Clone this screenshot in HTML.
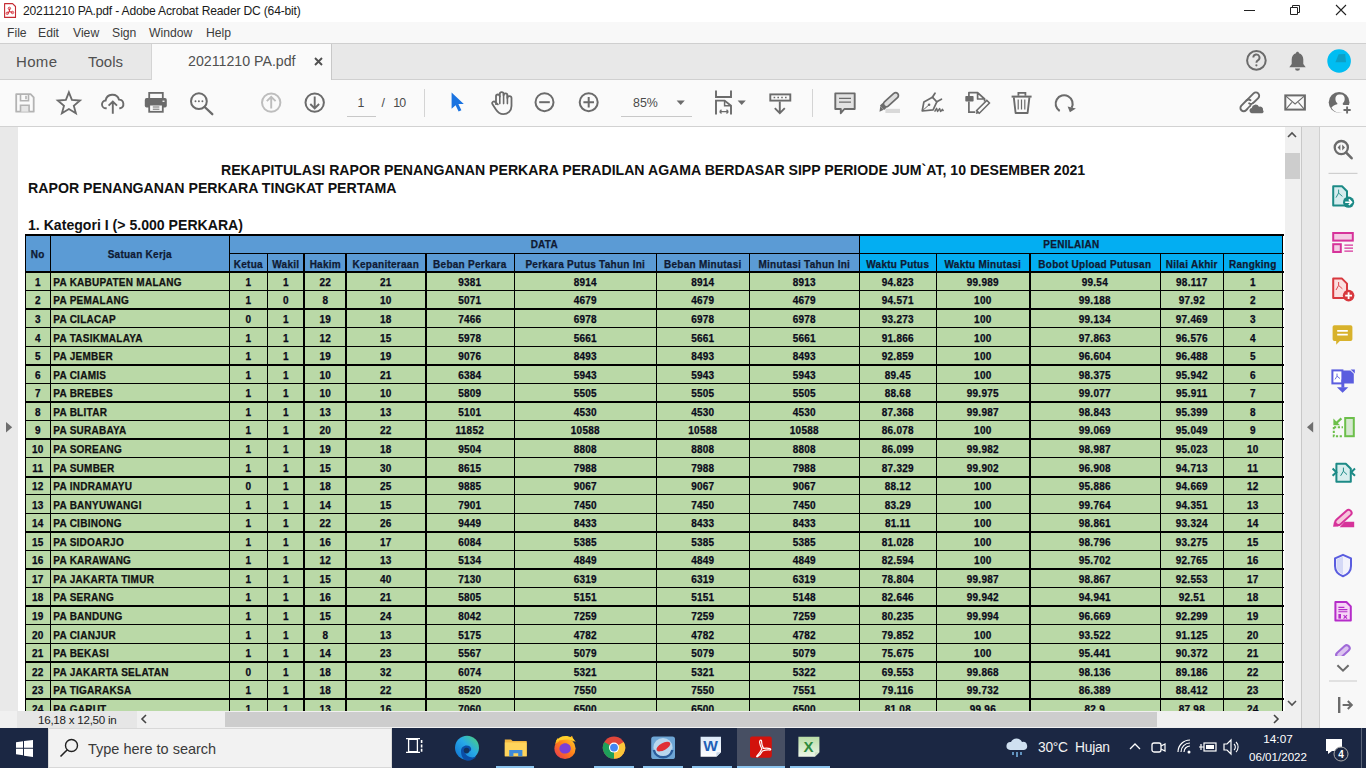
<!DOCTYPE html><html><head><meta charset="utf-8"><style>
*{margin:0;padding:0;box-sizing:border-box}
html,body{width:1366px;height:768px;overflow:hidden;background:#fff;font-family:"Liberation Sans",sans-serif;position:relative}
.a{position:absolute}
.t{position:absolute;white-space:nowrap}
.tb{font-weight:bold;color:#111;font-size:10px;line-height:12px;letter-spacing:0.26px;-webkit-text-stroke:0.25px currentColor}
svg{position:absolute;overflow:visible}
</style></head><body><div class="a" style="left:0;top:0;width:1366px;height:22px;background:#fff"></div>
<svg style="left:0;top:0" width="20" height="22"><path d="M4.6 3.6h8l2.9 2.9v10.9h-10.9z" fill="#fff" stroke="#c52a32" stroke-width="1.1" stroke-linejoin="round"/><path d="M9.4 8.4L9.4 11.4L7.4 13.3M9.4 11.4L12.5 12.5" fill="none" stroke="#d42a36" stroke-width="1.1"/><circle cx="9.4" cy="8.4" r="1.2" fill="none" stroke="#d42a36" stroke-width="0.9"/><circle cx="7.3" cy="13.3" r="1.2" fill="none" stroke="#d42a36" stroke-width="0.9"/><circle cx="12.5" cy="12.5" r="1.2" fill="none" stroke="#d42a36" stroke-width="0.9"/></svg>
<div class="t" style="left:23px;top:4px;font-size:12.1px;letter-spacing:-0.18px;color:#1a1a1a">20211210 PA.pdf - Adobe Acrobat Reader DC (64-bit)</div>
<div class="a" style="left:1244px;top:10px;width:11px;height:1px;background:#222"></div>
<svg style="left:1280px;top:0px" width="30" height="22"><path d="M10.5 7.5h7v7h-7z M12.5 7.5V5.5H19.5V12.5H17.5" fill="none" stroke="#222" stroke-width="1"/></svg>
<svg style="left:1335px;top:5px" width="12" height="12"><path d="M1 0L11 10M11 0L1 10" stroke="#222" stroke-width="1.1"/></svg>
<div class="a" style="left:0;top:22px;width:1366px;height:21px;background:#f8f8f8"></div>
<div class="t" style="left:7px;top:26px;font-size:12.2px;color:#3c3c3c">File</div>
<div class="t" style="left:38px;top:26px;font-size:12.2px;color:#3c3c3c">Edit</div>
<div class="t" style="left:73px;top:26px;font-size:12.2px;color:#3c3c3c">View</div>
<div class="t" style="left:112px;top:26px;font-size:12.2px;color:#3c3c3c">Sign</div>
<div class="t" style="left:149px;top:26px;font-size:12.2px;color:#3c3c3c">Window</div>
<div class="t" style="left:206px;top:26px;font-size:12.2px;color:#3c3c3c">Help</div>
<div class="a" style="left:0;top:43px;width:1366px;height:1px;background:#cfcfcf"></div>
<div class="a" style="left:0;top:44px;width:1366px;height:36px;background:#e8e8e8"></div>
<div class="a" style="left:0;top:79px;width:1366px;height:1px;background:#d0d0d0"></div>
<div class="a" style="left:151px;top:44px;width:181px;height:36px;background:#fafafa;border-left:1px solid #d4d4d4;border-right:1px solid #c8c8c8"></div>
<div class="t" style="left:16px;top:53px;font-size:15px;letter-spacing:0.35px;color:#505050">Home</div>
<div class="t" style="left:88px;top:53px;font-size:15px;color:#505050">Tools</div>
<div class="t" style="left:188px;top:53px;font-size:14.2px;color:#505050">20211210 PA.pdf</div>
<svg style="left:314px;top:57px" width="9" height="9"><path d="M1 1L8 8M8 1L1 8" stroke="#505050" stroke-width="1.9"/></svg>
<div class="a" style="left:0;top:80px;width:1366px;height:46px;background:#fafafa"></div>
<div class="a" style="left:0;top:126px;width:1366px;height:1px;background:#d2d2d2"></div>
<svg style="left:0;top:0" width="1366" height="130" viewBox="0 0 1366 130"><circle cx="1256.4" cy="60.4" r="9.3" fill="none" stroke="#6b6b6b" stroke-width="2"/><path d="M1253.3 57.6a3.1 3.1 0 1 1 4.6 2.7c-1.1 0.6-1.5 1.2-1.5 2.4" fill="none" stroke="#6b6b6b" stroke-width="1.9"/><circle cx="1256.4" cy="65.3" r="1.1" fill="#6b6b6b"/><path d="M1297.5 51.8c-0.9 0-1.4 0.6-1.5 1.4c-2.6 0.7-4.3 3.1-4.3 6.2v4.6l-2.4 3.3h16.4l-2.4-3.3v-4.6c0-3.1-1.7-5.5-4.3-6.2c-0.1-0.8-0.6-1.4-1.5-1.4z" fill="#6b6b6b"/><path d="M1295 68.5a2.5 2.2 0 0 0 5 0z" fill="#6b6b6b"/><circle cx="1339.1" cy="61" r="11.8" fill="#00bdf2"/><path d="M1335.4 62.2 L1338.6 54.2 L1345.2 54 L1346 62.2 Z" fill="#0c9fc6"/><path d="M16.2 94.2h14.4l3.1 3.1v14.4h-17.5z" fill="none" stroke="#b3b3b3" stroke-width="1.8" stroke-linejoin="round"/><path d="M20.5 94.2v6.6h8v-6.6" fill="none" stroke="#b3b3b3" stroke-width="1.6"/><rect x="25.2" y="95.8" width="1.6" height="3.4" fill="#b3b3b3"/><path d="M20.5 111.7v-6.4h8.6v6.4" fill="#e6e6e6" stroke="#b3b3b3" stroke-width="1.6"/><path d="M68.9 92.3 L71.9 99.9 L80 100.5 L73.8 105.7 L75.9 113.3 L68.9 109 L61.9 113.3 L64 105.7 L57.8 100.5 L65.9 99.9 Z" fill="none" stroke="#6b6b6b" stroke-width="1.8" stroke-linejoin="miter"/><path d="M106.7 108.3h-0.5a3.9 3.9 0 0 1-0.6-7.8 A6.9 6.9 0 0 1 119 99.6 a4.4 4.4 0 0 1 0.9 8.7h-0.6" fill="none" stroke="#6b6b6b" stroke-width="1.9"/><path d="M112.8 113.8V101.8 M108.6 105.7L112.8 101.5L117 105.7" fill="none" stroke="#6b6b6b" stroke-width="1.9"/><rect x="149.2" y="92.9" width="13.6" height="6" fill="none" stroke="#6b6b6b" stroke-width="1.8"/><rect x="144.8" y="98.1" width="22" height="9.4" rx="1.8" fill="#6b6b6b"/><rect x="162.5" y="100.6" width="2" height="1.3" fill="#fafafa"/><rect x="149.2" y="104.6" width="13.6" height="7.2" fill="#fafafa" stroke="#6b6b6b" stroke-width="1.8"/><path d="M152.8 107h6.6M152.8 109.2h6.6" stroke="#6b6b6b" stroke-width="1"/><circle cx="198.9" cy="101.2" r="7.9" fill="none" stroke="#6b6b6b" stroke-width="2"/><path d="M204.7 107 L212.3 114.2" stroke="#6b6b6b" stroke-width="2.3" stroke-linecap="round"/><circle cx="195.5" cy="101.3" r="0.95" fill="#6b6b6b"/><circle cx="198.9" cy="101.3" r="0.95" fill="#6b6b6b"/><circle cx="202.4" cy="101.3" r="0.95" fill="#6b6b6b"/><circle cx="271.2" cy="102.6" r="9.2" fill="none" stroke="#bdbdbd" stroke-width="2"/><path d="M271.2 108.6V96.8 M266.8 101.2L271.2 96.8L275.6 101.2" fill="none" stroke="#bdbdbd" stroke-width="1.9"/><circle cx="314.7" cy="102.6" r="9.2" fill="none" stroke="#6b6b6b" stroke-width="2"/><path d="M314.7 96.6V108.4 M310.3 104L314.7 108.4L319.1 104" fill="none" stroke="#6b6b6b" stroke-width="1.9"/><path d="M451.6 92.6 L451.6 108.8 L455.6 105.3 L458.6 111.6 L461.4 110.3 L458.4 104.1 L463.8 104.1 Z" fill="#1a73e0"/><path d="M496 104.2 V96.4 a1.9 1.9 0 0 1 3.8 0 V94.1 a1.9 1.9 0 0 1 3.8 0 V95.3 a1.9 1.9 0 0 1 3.8 0 V98.1 a2.05 2.05 0 0 1 4.1 0 V106 c0 4.6 -3.6 8.2 -8.2 8.2 c-3.4 0 -5.6 -1.8 -7.4 -4.6 l-3.4 -5.4 a1.75 1.75 0 0 1 2.7 -2.2 l2.6 2.4" fill="none" stroke="#6b6b6b" stroke-width="1.8" stroke-linejoin="round" stroke-linecap="round"/><path d="M499.8 96.4V103.6 M503.6 94.1V103.6 M507.4 95.3V103.6" fill="none" stroke="#6b6b6b" stroke-width="1.6" stroke-linecap="round"/><circle cx="544.5" cy="102.2" r="9" fill="none" stroke="#6b6b6b" stroke-width="2"/><path d="M539.2 102.2h10.6" stroke="#6b6b6b" stroke-width="2"/><circle cx="588.7" cy="102.2" r="9" fill="none" stroke="#6b6b6b" stroke-width="2"/><path d="M583.4 102.2h10.6M588.7 96.9v10.6" stroke="#6b6b6b" stroke-width="2"/><path d="M676.6 100.4h8.2l-4.1 4.6z" fill="#6b6b6b"/><path d="M737.6 100.4h8.2l-4.1 4.6z" fill="#6b6b6b"/><path d="M716 90.6v6.4h15v-6.4" fill="none" stroke="#6b6b6b" stroke-width="1.9"/><path d="M716 114.6V100.6h8.6l6.4 5.2v8.8" fill="none" stroke="#6b6b6b" stroke-width="1.9"/><path d="M724.6 100.6v5.2h6.4" fill="none" stroke="#6b6b6b" stroke-width="1.5"/><path d="M719.6 111.6h8.8 M719.6 111.6l1.9-1.9M719.6 111.6l1.9 1.9 M728.4 111.6l-1.9-1.9M728.4 111.6l-1.9 1.9" fill="none" stroke="#6b6b6b" stroke-width="1.3"/><rect x="770.3" y="94.4" width="20" height="6.2" fill="none" stroke="#6b6b6b" stroke-width="1.9"/><path d="M773.6 97.5h1.6M777.4 97.5h1.6M781.2 97.5h1.6M785 97.5h1.6" stroke="#6b6b6b" stroke-width="1.5"/><path d="M779.8 101.4V113 M774.8 108.1L779.8 113.1L784.8 108.1" fill="none" stroke="#6b6b6b" stroke-width="1.9"/><path d="M835.3 93.4h19.4v15.6h-10.3l-3.6 4.2v-4.2h-5.5z" fill="#e2e2e2" stroke="#6b6b6b" stroke-width="1.9" stroke-linejoin="round"/><path d="M839 98.4h12M839 102.2h12" stroke="#6b6b6b" stroke-width="1.3"/><g transform="translate(884.2 105.8) rotate(-42)"><rect x="0" y="-2.8" width="18.2" height="5.6" rx="2.8" fill="#dedede" stroke="#6b6b6b" stroke-width="1.7"/><rect x="-3" y="-3.1" width="3.6" height="6.2" fill="#6b6b6b"/><path d="M-3 -2.6 L-7.4 1.2 L-3 2.6 Z" fill="#6b6b6b"/></g><rect x="885.4" y="108.8" width="14.6" height="4.2" fill="#d9d9d9"/><path d="M922.2 111 L923.9 101.9 L932.4 97.2 L936.8 101.8 L933.1 109.8 Z" fill="none" stroke="#6b6b6b" stroke-width="1.7" stroke-linejoin="round"/><path d="M932.4 97.2 L935 93.2 M936.8 101.8 L941.4 99.3" fill="none" stroke="#6b6b6b" stroke-width="1.8" stroke-linecap="round"/><path d="M922.8 110.4 L929 104.8" stroke="#6b6b6b" stroke-width="1"/><circle cx="929.1" cy="104.8" r="1.3" fill="#6b6b6b"/><path d="M934.6 111.6 L936.6 108.4 L937.6 111.4 L939.6 108.6 L940.6 111.4 L942.4 109.4 L943.4 111.2" fill="none" stroke="#6b6b6b" stroke-width="1.5" stroke-linejoin="round"/><rect x="965.3" y="95.9" width="8.3" height="5.7" rx="0.8" fill="#6b6b6b"/><path d="M968.9 95.9V92.6h8.7l7 6.4v2.4 M977.6 92.6v6.4h7" fill="none" stroke="#6b6b6b" stroke-width="1.7" stroke-linejoin="round"/><path d="M968.9 101.6V112.2h6.4" fill="none" stroke="#6b6b6b" stroke-width="1.7"/><g transform="translate(976.4 113.4) rotate(-45)"><rect x="2.2" y="-1.9" width="14.4" height="3.8" fill="#fafafa" stroke="#6b6b6b" stroke-width="1.5"/><path d="M2.2 -1.9 L-0.8 0 L2.2 1.9 Z" fill="#6b6b6b"/></g><path d="M1018.4 95.8v-3h7v3" fill="none" stroke="#6b6b6b" stroke-width="1.8"/><path d="M1011.6 96.6h20" stroke="#6b6b6b" stroke-width="2"/><path d="M1013.8 97.4 L1015.6 113 H1027.6 L1029.4 97.4" fill="none" stroke="#6b6b6b" stroke-width="1.9" stroke-linejoin="round"/><path d="M1018.2 99.6v10M1021.5 99.6v10M1024.8 99.6v10" stroke="#6b6b6b" stroke-width="1.2"/><path d="M1059.7 111 A8.5 8.5 0 1 1 1071.6 107.8" fill="none" stroke="#6b6b6b" stroke-width="2.1"/><path d="M1067.6 106.4 L1075.9 108.6 L1069.9 112.2 Z" fill="#6b6b6b"/><g transform="translate(1249.8 101.8) rotate(-45)"><path d="M-1.2 -3.3 H8.6 A3.3 3.3 0 0 1 8.6 3.3 H1.2 A3.1 3.1 0 0 1 -1.6 0.6" fill="none" stroke="#6b6b6b" stroke-width="1.9" stroke-linecap="round"/><path d="M1.2 3.3 H-8.6 A3.3 3.3 0 0 1 -8.6 -3.3 H-1.2 A3.1 3.1 0 0 1 1.6 -0.6" fill="none" stroke="#6b6b6b" stroke-width="1.9" stroke-linecap="round"/></g><path d="M1251.6 113.2 a2.7 2.7 0 0 1 0.1-5.3 a3.9 3.9 0 0 1 7.3-1.2 a3.1 3.1 0 0 1 4 3.6 a1.9 1.9 0 0 1 -0.6 2.9z" fill="#fafafa" stroke="#fafafa" stroke-width="2.4"/><path d="M1251.6 113.2 a2.7 2.7 0 0 1 0.1-5.3 a3.9 3.9 0 0 1 7.3-1.2 a3.1 3.1 0 0 1 4 3.6 a1.9 1.9 0 0 1 -0.6 2.9z" fill="#6b6b6b"/><rect x="1285.3" y="95.4" width="19.6" height="14.2" fill="none" stroke="#6b6b6b" stroke-width="2"/><path d="M1285.6 95.8 L1295.1 104 L1304.6 95.8 M1285.8 109.4 L1291.8 102.4 M1304.4 109.4 L1298.4 102.4" fill="none" stroke="#6b6b6b" stroke-width="1.1"/><circle cx="1339.1" cy="102.4" r="10.4" fill="#6b6b6b"/><path d="M1339.2 94.6c-2.3 0-3.8 1.9-3.8 4.3c0 1.8 0.8 3.4 1.9 4.2v1.1c-2.6 0.6-4.6 1.8-5.9 3.6a10.4 10.4 0 0 0 9.6 5c1 0 2-0.1 2.9-0.4v-6c0-1-0.5-1.6-1.1-1.9v-1.4c1.1-0.8 1.9-2.4 1.9-4.2c0-2.4-1.5-4.3-3.5-4.3z" fill="#fafafa"/><rect x="1342.3" y="105" width="9.6" height="9.6" fill="#fafafa"/><path d="M1347.1 106.4v7.2M1343.5 110h7.2" stroke="#6b6b6b" stroke-width="1.9"/></svg>
<div class="t" style="left:357.6px;top:96px;font-size:12.4px;color:#4a4a4a">1</div>
<div class="a" style="left:347px;top:116px;width:29px;height:1px;background:#c8c8c8"></div>
<div class="t" style="left:381.4px;top:96px;font-size:12.4px;color:#4a4a4a">/</div>
<div class="t" style="left:393.2px;top:96px;font-size:12.4px;letter-spacing:-0.9px;color:#4a4a4a">10</div>
<div class="a" style="left:424px;top:89px;width:1px;height:28px;background:#d4d4d4"></div>
<div class="t" style="left:633px;top:96px;font-size:12.4px;color:#4a4a4a">85%</div>
<div class="a" style="left:621px;top:116px;width:71px;height:1px;background:#c8c8c8"></div>
<div class="a" style="left:812px;top:89px;width:1px;height:28px;background:#d4d4d4"></div>
<div class="a" style="left:0;top:127px;width:1301px;height:584px;background:#e9e9e9"></div>
<div class="a" style="left:18px;top:127px;width:1267px;height:584px;background:#fff"></div>
<svg style="left:0;top:410px" width="16" height="26"><path d="M6 12v10.6L12.2 17.3z" fill="#6e6e6e"/></svg>
<div class="a" style="left:1285px;top:127px;width:16px;height:584px;background:#f0f0f0"></div>
<div class="a" style="left:1285px;top:153px;width:15px;height:26px;background:#cdcdcd"></div>
<svg style="left:1287px;top:131px" width="10" height="8"><path d="M1 6l4-4 4 4" fill="none" stroke="#505050" stroke-width="1.6"/></svg>
<svg style="left:1287px;top:699px" width="10" height="8"><path d="M1 2l4 4 4-4" fill="none" stroke="#505050" stroke-width="1.6"/></svg>
<div class="a" style="left:1301px;top:127px;width:1px;height:601px;background:#c8c8c8"></div>
<div class="a" style="left:1302px;top:127px;width:17px;height:601px;background:#e8e8e8"></div>
<svg style="left:1300px;top:410px" width="20" height="26"><path d="M13.2 11.8v10.8L7 17.2z" fill="#6e6e6e"/></svg>
<div class="a" style="left:1319px;top:127px;width:1px;height:601px;background:#d0d0d0"></div>
<div class="a" style="left:1320px;top:127px;width:46px;height:601px;background:#f8f8f8"></div>
<div class="t" style="left:221px;top:162px;font-size:14.12px;font-weight:bold;color:#111">REKAPITULASI RAPOR PENANGANAN PERKARA PERADILAN AGAMA BERDASAR SIPP PERIODE JUM`AT, 10 DESEMBER 2021</div>
<div class="t" style="left:28px;top:180px;font-size:14.17px;font-weight:bold;color:#111">RAPOR PENANGANAN PERKARA TINGKAT PERTAMA</div>
<div class="t" style="left:28px;top:217px;font-size:14.1px;font-weight:bold;color:#111">1. Kategori I (&gt; 5.000 PERKARA)</div>
<div class="a" style="left:25px;top:234.5px;width:834px;height:37.0px;background:#5b9bd5"></div>
<div class="a" style="left:859px;top:234.5px;width:424.29999999999995px;height:37.0px;background:#03aef2"></div>
<div class="a" style="left:25px;top:271.5px;width:1258.3px;height:439.5px;background:#bad9a7"></div>
<div class="a" style="left:25px;top:234px;width:1259px;height:2px;background:#000"></div>
<div class="a" style="left:229px;top:253px;width:1055px;height:1px;background:#000"></div>
<div class="a" style="left:25px;top:271px;width:1259px;height:2px;background:#000"></div>
<div class="a" style="left:25px;top:290px;width:1259px;height:1px;background:#000"></div>
<div class="a" style="left:25px;top:308px;width:1259px;height:2px;background:#000"></div>
<div class="a" style="left:25px;top:327px;width:1259px;height:1px;background:#000"></div>
<div class="a" style="left:25px;top:346px;width:1259px;height:1px;background:#000"></div>
<div class="a" style="left:25px;top:364px;width:1259px;height:2px;background:#000"></div>
<div class="a" style="left:25px;top:383px;width:1259px;height:1px;background:#000"></div>
<div class="a" style="left:25px;top:401px;width:1259px;height:2px;background:#000"></div>
<div class="a" style="left:25px;top:420px;width:1259px;height:1px;background:#000"></div>
<div class="a" style="left:25px;top:438px;width:1259px;height:2px;background:#000"></div>
<div class="a" style="left:25px;top:457px;width:1259px;height:1px;background:#000"></div>
<div class="a" style="left:25px;top:476px;width:1259px;height:2px;background:#000"></div>
<div class="a" style="left:25px;top:494px;width:1259px;height:1px;background:#000"></div>
<div class="a" style="left:25px;top:513px;width:1259px;height:1px;background:#000"></div>
<div class="a" style="left:25px;top:531px;width:1259px;height:2px;background:#000"></div>
<div class="a" style="left:25px;top:550px;width:1259px;height:1px;background:#000"></div>
<div class="a" style="left:25px;top:568px;width:1259px;height:2px;background:#000"></div>
<div class="a" style="left:25px;top:587px;width:1259px;height:1px;background:#000"></div>
<div class="a" style="left:25px;top:605px;width:1259px;height:2px;background:#000"></div>
<div class="a" style="left:25px;top:624px;width:1259px;height:1px;background:#000"></div>
<div class="a" style="left:25px;top:643px;width:1259px;height:1px;background:#000"></div>
<div class="a" style="left:25px;top:661px;width:1259px;height:2px;background:#000"></div>
<div class="a" style="left:25px;top:680px;width:1259px;height:1px;background:#000"></div>
<div class="a" style="left:25px;top:698px;width:1259px;height:2px;background:#000"></div>
<div class="a" style="left:25px;top:234px;width:1px;height:477px;background:#000"></div>
<div class="a" style="left:50px;top:234px;width:1px;height:477px;background:#000"></div>
<div class="a" style="left:229px;top:234px;width:1px;height:477px;background:#000"></div>
<div class="a" style="left:267px;top:253px;width:1px;height:458px;background:#000"></div>
<div class="a" style="left:303px;top:253px;width:2px;height:458px;background:#000"></div>
<div class="a" style="left:345px;top:253px;width:2px;height:458px;background:#000"></div>
<div class="a" style="left:425px;top:253px;width:2px;height:458px;background:#000"></div>
<div class="a" style="left:514px;top:253px;width:1px;height:458px;background:#000"></div>
<div class="a" style="left:656px;top:253px;width:1px;height:458px;background:#000"></div>
<div class="a" style="left:749px;top:253px;width:1px;height:458px;background:#000"></div>
<div class="a" style="left:859px;top:234px;width:1px;height:477px;background:#000"></div>
<div class="a" style="left:936px;top:253px;width:1px;height:458px;background:#000"></div>
<div class="a" style="left:1029px;top:253px;width:2px;height:458px;background:#000"></div>
<div class="a" style="left:1160px;top:253px;width:1px;height:458px;background:#000"></div>
<div class="a" style="left:1223px;top:253px;width:1px;height:458px;background:#000"></div>
<div class="a" style="left:1282px;top:234px;width:1px;height:477px;background:#000"></div>
<div class="t tb" style="left:25.3px;width:25px;top:248.7px;text-align:center;font-size:10px;color:#0f1a33">No</div>
<div class="t tb" style="left:50.3px;width:179px;top:248.7px;text-align:center;font-size:10px;color:#0f1a33">Satuan Kerja</div>
<div class="t tb" style="left:229.3px;width:630px;top:239.2px;text-align:center;font-size:10px;color:#0f1a33">DATA</div>
<div class="t tb" style="left:859.3px;width:424.29999999999995px;top:239.2px;text-align:center;font-size:10px;color:#0f1a33">PENILAIAN</div>
<div class="t tb" style="left:229.3px;width:38px;top:258.7px;text-align:center;font-size:10px;color:#0f1a33">Ketua</div>
<div class="t tb" style="left:267.3px;width:37px;top:258.7px;text-align:center;font-size:10px;color:#0f1a33">Wakil</div>
<div class="t tb" style="left:304.3px;width:42px;top:258.7px;text-align:center;font-size:10px;color:#0f1a33">Hakim</div>
<div class="t tb" style="left:346.3px;width:79px;top:258.7px;text-align:center;font-size:10px;color:#0f1a33">Kepaniteraan</div>
<div class="t tb" style="left:425.3px;width:89px;top:258.7px;text-align:center;font-size:10px;color:#0f1a33">Beban Perkara</div>
<div class="t tb" style="left:514.3px;width:142px;top:258.7px;text-align:center;font-size:10px;color:#0f1a33">Perkara Putus Tahun Ini</div>
<div class="t tb" style="left:656.3px;width:93px;top:258.7px;text-align:center;font-size:10px;color:#0f1a33">Beban Minutasi</div>
<div class="t tb" style="left:749.3px;width:110px;top:258.7px;text-align:center;font-size:10px;color:#0f1a33">Minutasi Tahun Ini</div>
<div class="t tb" style="left:859.3px;width:77px;top:258.7px;text-align:center;font-size:10px;color:#0f1a33">Waktu Putus</div>
<div class="t tb" style="left:936.3px;width:93px;top:258.7px;text-align:center;font-size:10px;color:#0f1a33">Waktu Minutasi</div>
<div class="t tb" style="left:1029.3px;width:131px;top:258.7px;text-align:center;font-size:10px;color:#0f1a33">Bobot Upload Putusan</div>
<div class="t tb" style="left:1160.3px;width:63px;top:258.7px;text-align:center;font-size:10px;color:#0f1a33">Nilai Akhir</div>
<div class="t tb" style="left:1223.3px;width:59px;top:258.7px;text-align:center;font-size:10px;color:#0f1a33">Rangking</div>
<div class="t tb" style="left:25.3px;width:25px;top:276.8px;text-align:center;font-size:10px;color:#0a0a1a">1</div>
<div class="t tb" style="left:53.3px;top:276.8px">PA KABUPATEN MALANG</div>
<div class="t tb" style="left:229.3px;width:38px;top:276.8px;text-align:center;font-size:10px;color:#0a0a1a">1</div>
<div class="t tb" style="left:267.3px;width:37px;top:276.8px;text-align:center;font-size:10px;color:#0a0a1a">1</div>
<div class="t tb" style="left:304.3px;width:42px;top:276.8px;text-align:center;font-size:10px;color:#0a0a1a">22</div>
<div class="t tb" style="left:346.3px;width:79px;top:276.8px;text-align:center;font-size:10px;color:#0a0a1a">21</div>
<div class="t tb" style="left:425.3px;width:89px;top:276.8px;text-align:center;font-size:10px;color:#0a0a1a">9381</div>
<div class="t tb" style="left:514.3px;width:142px;top:276.8px;text-align:center;font-size:10px;color:#0a0a1a">8914</div>
<div class="t tb" style="left:656.3px;width:93px;top:276.8px;text-align:center;font-size:10px;color:#0a0a1a">8914</div>
<div class="t tb" style="left:749.3px;width:110px;top:276.8px;text-align:center;font-size:10px;color:#0a0a1a">8913</div>
<div class="t tb" style="left:859.3px;width:77px;top:276.8px;text-align:center;font-size:10px;color:#0a0a1a">94.823</div>
<div class="t tb" style="left:936.3px;width:93px;top:276.8px;text-align:center;font-size:10px;color:#0a0a1a">99.989</div>
<div class="t tb" style="left:1029.3px;width:131px;top:276.8px;text-align:center;font-size:10px;color:#0a0a1a">99.54</div>
<div class="t tb" style="left:1160.3px;width:63px;top:276.8px;text-align:center;font-size:10px;color:#0a0a1a">98.117</div>
<div class="t tb" style="left:1223.3px;width:59px;top:276.8px;text-align:center;font-size:10px;color:#0a0a1a">1</div>
<div class="t tb" style="left:25.3px;width:25px;top:295.4px;text-align:center;font-size:10px;color:#0a0a1a">2</div>
<div class="t tb" style="left:53.3px;top:295.4px">PA PEMALANG</div>
<div class="t tb" style="left:229.3px;width:38px;top:295.4px;text-align:center;font-size:10px;color:#0a0a1a">1</div>
<div class="t tb" style="left:267.3px;width:37px;top:295.4px;text-align:center;font-size:10px;color:#0a0a1a">0</div>
<div class="t tb" style="left:304.3px;width:42px;top:295.4px;text-align:center;font-size:10px;color:#0a0a1a">8</div>
<div class="t tb" style="left:346.3px;width:79px;top:295.4px;text-align:center;font-size:10px;color:#0a0a1a">10</div>
<div class="t tb" style="left:425.3px;width:89px;top:295.4px;text-align:center;font-size:10px;color:#0a0a1a">5071</div>
<div class="t tb" style="left:514.3px;width:142px;top:295.4px;text-align:center;font-size:10px;color:#0a0a1a">4679</div>
<div class="t tb" style="left:656.3px;width:93px;top:295.4px;text-align:center;font-size:10px;color:#0a0a1a">4679</div>
<div class="t tb" style="left:749.3px;width:110px;top:295.4px;text-align:center;font-size:10px;color:#0a0a1a">4679</div>
<div class="t tb" style="left:859.3px;width:77px;top:295.4px;text-align:center;font-size:10px;color:#0a0a1a">94.571</div>
<div class="t tb" style="left:936.3px;width:93px;top:295.4px;text-align:center;font-size:10px;color:#0a0a1a">100</div>
<div class="t tb" style="left:1029.3px;width:131px;top:295.4px;text-align:center;font-size:10px;color:#0a0a1a">99.188</div>
<div class="t tb" style="left:1160.3px;width:63px;top:295.4px;text-align:center;font-size:10px;color:#0a0a1a">97.92</div>
<div class="t tb" style="left:1223.3px;width:59px;top:295.4px;text-align:center;font-size:10px;color:#0a0a1a">2</div>
<div class="t tb" style="left:25.3px;width:25px;top:313.9px;text-align:center;font-size:10px;color:#0a0a1a">3</div>
<div class="t tb" style="left:53.3px;top:313.9px">PA CILACAP</div>
<div class="t tb" style="left:229.3px;width:38px;top:313.9px;text-align:center;font-size:10px;color:#0a0a1a">0</div>
<div class="t tb" style="left:267.3px;width:37px;top:313.9px;text-align:center;font-size:10px;color:#0a0a1a">1</div>
<div class="t tb" style="left:304.3px;width:42px;top:313.9px;text-align:center;font-size:10px;color:#0a0a1a">19</div>
<div class="t tb" style="left:346.3px;width:79px;top:313.9px;text-align:center;font-size:10px;color:#0a0a1a">18</div>
<div class="t tb" style="left:425.3px;width:89px;top:313.9px;text-align:center;font-size:10px;color:#0a0a1a">7466</div>
<div class="t tb" style="left:514.3px;width:142px;top:313.9px;text-align:center;font-size:10px;color:#0a0a1a">6978</div>
<div class="t tb" style="left:656.3px;width:93px;top:313.9px;text-align:center;font-size:10px;color:#0a0a1a">6978</div>
<div class="t tb" style="left:749.3px;width:110px;top:313.9px;text-align:center;font-size:10px;color:#0a0a1a">6978</div>
<div class="t tb" style="left:859.3px;width:77px;top:313.9px;text-align:center;font-size:10px;color:#0a0a1a">93.273</div>
<div class="t tb" style="left:936.3px;width:93px;top:313.9px;text-align:center;font-size:10px;color:#0a0a1a">100</div>
<div class="t tb" style="left:1029.3px;width:131px;top:313.9px;text-align:center;font-size:10px;color:#0a0a1a">99.134</div>
<div class="t tb" style="left:1160.3px;width:63px;top:313.9px;text-align:center;font-size:10px;color:#0a0a1a">97.469</div>
<div class="t tb" style="left:1223.3px;width:59px;top:313.9px;text-align:center;font-size:10px;color:#0a0a1a">3</div>
<div class="t tb" style="left:25.3px;width:25px;top:332.5px;text-align:center;font-size:10px;color:#0a0a1a">4</div>
<div class="t tb" style="left:53.3px;top:332.5px">PA TASIKMALAYA</div>
<div class="t tb" style="left:229.3px;width:38px;top:332.5px;text-align:center;font-size:10px;color:#0a0a1a">1</div>
<div class="t tb" style="left:267.3px;width:37px;top:332.5px;text-align:center;font-size:10px;color:#0a0a1a">1</div>
<div class="t tb" style="left:304.3px;width:42px;top:332.5px;text-align:center;font-size:10px;color:#0a0a1a">12</div>
<div class="t tb" style="left:346.3px;width:79px;top:332.5px;text-align:center;font-size:10px;color:#0a0a1a">15</div>
<div class="t tb" style="left:425.3px;width:89px;top:332.5px;text-align:center;font-size:10px;color:#0a0a1a">5978</div>
<div class="t tb" style="left:514.3px;width:142px;top:332.5px;text-align:center;font-size:10px;color:#0a0a1a">5661</div>
<div class="t tb" style="left:656.3px;width:93px;top:332.5px;text-align:center;font-size:10px;color:#0a0a1a">5661</div>
<div class="t tb" style="left:749.3px;width:110px;top:332.5px;text-align:center;font-size:10px;color:#0a0a1a">5661</div>
<div class="t tb" style="left:859.3px;width:77px;top:332.5px;text-align:center;font-size:10px;color:#0a0a1a">91.866</div>
<div class="t tb" style="left:936.3px;width:93px;top:332.5px;text-align:center;font-size:10px;color:#0a0a1a">100</div>
<div class="t tb" style="left:1029.3px;width:131px;top:332.5px;text-align:center;font-size:10px;color:#0a0a1a">97.863</div>
<div class="t tb" style="left:1160.3px;width:63px;top:332.5px;text-align:center;font-size:10px;color:#0a0a1a">96.576</div>
<div class="t tb" style="left:1223.3px;width:59px;top:332.5px;text-align:center;font-size:10px;color:#0a0a1a">4</div>
<div class="t tb" style="left:25.3px;width:25px;top:351.1px;text-align:center;font-size:10px;color:#0a0a1a">5</div>
<div class="t tb" style="left:53.3px;top:351.1px">PA JEMBER</div>
<div class="t tb" style="left:229.3px;width:38px;top:351.1px;text-align:center;font-size:10px;color:#0a0a1a">1</div>
<div class="t tb" style="left:267.3px;width:37px;top:351.1px;text-align:center;font-size:10px;color:#0a0a1a">1</div>
<div class="t tb" style="left:304.3px;width:42px;top:351.1px;text-align:center;font-size:10px;color:#0a0a1a">19</div>
<div class="t tb" style="left:346.3px;width:79px;top:351.1px;text-align:center;font-size:10px;color:#0a0a1a">19</div>
<div class="t tb" style="left:425.3px;width:89px;top:351.1px;text-align:center;font-size:10px;color:#0a0a1a">9076</div>
<div class="t tb" style="left:514.3px;width:142px;top:351.1px;text-align:center;font-size:10px;color:#0a0a1a">8493</div>
<div class="t tb" style="left:656.3px;width:93px;top:351.1px;text-align:center;font-size:10px;color:#0a0a1a">8493</div>
<div class="t tb" style="left:749.3px;width:110px;top:351.1px;text-align:center;font-size:10px;color:#0a0a1a">8493</div>
<div class="t tb" style="left:859.3px;width:77px;top:351.1px;text-align:center;font-size:10px;color:#0a0a1a">92.859</div>
<div class="t tb" style="left:936.3px;width:93px;top:351.1px;text-align:center;font-size:10px;color:#0a0a1a">100</div>
<div class="t tb" style="left:1029.3px;width:131px;top:351.1px;text-align:center;font-size:10px;color:#0a0a1a">96.604</div>
<div class="t tb" style="left:1160.3px;width:63px;top:351.1px;text-align:center;font-size:10px;color:#0a0a1a">96.488</div>
<div class="t tb" style="left:1223.3px;width:59px;top:351.1px;text-align:center;font-size:10px;color:#0a0a1a">5</div>
<div class="t tb" style="left:25.3px;width:25px;top:369.6px;text-align:center;font-size:10px;color:#0a0a1a">6</div>
<div class="t tb" style="left:53.3px;top:369.6px">PA CIAMIS</div>
<div class="t tb" style="left:229.3px;width:38px;top:369.6px;text-align:center;font-size:10px;color:#0a0a1a">1</div>
<div class="t tb" style="left:267.3px;width:37px;top:369.6px;text-align:center;font-size:10px;color:#0a0a1a">1</div>
<div class="t tb" style="left:304.3px;width:42px;top:369.6px;text-align:center;font-size:10px;color:#0a0a1a">10</div>
<div class="t tb" style="left:346.3px;width:79px;top:369.6px;text-align:center;font-size:10px;color:#0a0a1a">21</div>
<div class="t tb" style="left:425.3px;width:89px;top:369.6px;text-align:center;font-size:10px;color:#0a0a1a">6384</div>
<div class="t tb" style="left:514.3px;width:142px;top:369.6px;text-align:center;font-size:10px;color:#0a0a1a">5943</div>
<div class="t tb" style="left:656.3px;width:93px;top:369.6px;text-align:center;font-size:10px;color:#0a0a1a">5943</div>
<div class="t tb" style="left:749.3px;width:110px;top:369.6px;text-align:center;font-size:10px;color:#0a0a1a">5943</div>
<div class="t tb" style="left:859.3px;width:77px;top:369.6px;text-align:center;font-size:10px;color:#0a0a1a">89.45</div>
<div class="t tb" style="left:936.3px;width:93px;top:369.6px;text-align:center;font-size:10px;color:#0a0a1a">100</div>
<div class="t tb" style="left:1029.3px;width:131px;top:369.6px;text-align:center;font-size:10px;color:#0a0a1a">98.375</div>
<div class="t tb" style="left:1160.3px;width:63px;top:369.6px;text-align:center;font-size:10px;color:#0a0a1a">95.942</div>
<div class="t tb" style="left:1223.3px;width:59px;top:369.6px;text-align:center;font-size:10px;color:#0a0a1a">6</div>
<div class="t tb" style="left:25.3px;width:25px;top:388.2px;text-align:center;font-size:10px;color:#0a0a1a">7</div>
<div class="t tb" style="left:53.3px;top:388.2px">PA BREBES</div>
<div class="t tb" style="left:229.3px;width:38px;top:388.2px;text-align:center;font-size:10px;color:#0a0a1a">1</div>
<div class="t tb" style="left:267.3px;width:37px;top:388.2px;text-align:center;font-size:10px;color:#0a0a1a">1</div>
<div class="t tb" style="left:304.3px;width:42px;top:388.2px;text-align:center;font-size:10px;color:#0a0a1a">10</div>
<div class="t tb" style="left:346.3px;width:79px;top:388.2px;text-align:center;font-size:10px;color:#0a0a1a">10</div>
<div class="t tb" style="left:425.3px;width:89px;top:388.2px;text-align:center;font-size:10px;color:#0a0a1a">5809</div>
<div class="t tb" style="left:514.3px;width:142px;top:388.2px;text-align:center;font-size:10px;color:#0a0a1a">5505</div>
<div class="t tb" style="left:656.3px;width:93px;top:388.2px;text-align:center;font-size:10px;color:#0a0a1a">5505</div>
<div class="t tb" style="left:749.3px;width:110px;top:388.2px;text-align:center;font-size:10px;color:#0a0a1a">5505</div>
<div class="t tb" style="left:859.3px;width:77px;top:388.2px;text-align:center;font-size:10px;color:#0a0a1a">88.68</div>
<div class="t tb" style="left:936.3px;width:93px;top:388.2px;text-align:center;font-size:10px;color:#0a0a1a">99.975</div>
<div class="t tb" style="left:1029.3px;width:131px;top:388.2px;text-align:center;font-size:10px;color:#0a0a1a">99.077</div>
<div class="t tb" style="left:1160.3px;width:63px;top:388.2px;text-align:center;font-size:10px;color:#0a0a1a">95.911</div>
<div class="t tb" style="left:1223.3px;width:59px;top:388.2px;text-align:center;font-size:10px;color:#0a0a1a">7</div>
<div class="t tb" style="left:25.3px;width:25px;top:406.8px;text-align:center;font-size:10px;color:#0a0a1a">8</div>
<div class="t tb" style="left:53.3px;top:406.8px">PA BLITAR</div>
<div class="t tb" style="left:229.3px;width:38px;top:406.8px;text-align:center;font-size:10px;color:#0a0a1a">1</div>
<div class="t tb" style="left:267.3px;width:37px;top:406.8px;text-align:center;font-size:10px;color:#0a0a1a">1</div>
<div class="t tb" style="left:304.3px;width:42px;top:406.8px;text-align:center;font-size:10px;color:#0a0a1a">13</div>
<div class="t tb" style="left:346.3px;width:79px;top:406.8px;text-align:center;font-size:10px;color:#0a0a1a">13</div>
<div class="t tb" style="left:425.3px;width:89px;top:406.8px;text-align:center;font-size:10px;color:#0a0a1a">5101</div>
<div class="t tb" style="left:514.3px;width:142px;top:406.8px;text-align:center;font-size:10px;color:#0a0a1a">4530</div>
<div class="t tb" style="left:656.3px;width:93px;top:406.8px;text-align:center;font-size:10px;color:#0a0a1a">4530</div>
<div class="t tb" style="left:749.3px;width:110px;top:406.8px;text-align:center;font-size:10px;color:#0a0a1a">4530</div>
<div class="t tb" style="left:859.3px;width:77px;top:406.8px;text-align:center;font-size:10px;color:#0a0a1a">87.368</div>
<div class="t tb" style="left:936.3px;width:93px;top:406.8px;text-align:center;font-size:10px;color:#0a0a1a">99.987</div>
<div class="t tb" style="left:1029.3px;width:131px;top:406.8px;text-align:center;font-size:10px;color:#0a0a1a">98.843</div>
<div class="t tb" style="left:1160.3px;width:63px;top:406.8px;text-align:center;font-size:10px;color:#0a0a1a">95.399</div>
<div class="t tb" style="left:1223.3px;width:59px;top:406.8px;text-align:center;font-size:10px;color:#0a0a1a">8</div>
<div class="t tb" style="left:25.3px;width:25px;top:425.3px;text-align:center;font-size:10px;color:#0a0a1a">9</div>
<div class="t tb" style="left:53.3px;top:425.3px">PA SURABAYA</div>
<div class="t tb" style="left:229.3px;width:38px;top:425.3px;text-align:center;font-size:10px;color:#0a0a1a">1</div>
<div class="t tb" style="left:267.3px;width:37px;top:425.3px;text-align:center;font-size:10px;color:#0a0a1a">1</div>
<div class="t tb" style="left:304.3px;width:42px;top:425.3px;text-align:center;font-size:10px;color:#0a0a1a">20</div>
<div class="t tb" style="left:346.3px;width:79px;top:425.3px;text-align:center;font-size:10px;color:#0a0a1a">22</div>
<div class="t tb" style="left:425.3px;width:89px;top:425.3px;text-align:center;font-size:10px;color:#0a0a1a">11852</div>
<div class="t tb" style="left:514.3px;width:142px;top:425.3px;text-align:center;font-size:10px;color:#0a0a1a">10588</div>
<div class="t tb" style="left:656.3px;width:93px;top:425.3px;text-align:center;font-size:10px;color:#0a0a1a">10588</div>
<div class="t tb" style="left:749.3px;width:110px;top:425.3px;text-align:center;font-size:10px;color:#0a0a1a">10588</div>
<div class="t tb" style="left:859.3px;width:77px;top:425.3px;text-align:center;font-size:10px;color:#0a0a1a">86.078</div>
<div class="t tb" style="left:936.3px;width:93px;top:425.3px;text-align:center;font-size:10px;color:#0a0a1a">100</div>
<div class="t tb" style="left:1029.3px;width:131px;top:425.3px;text-align:center;font-size:10px;color:#0a0a1a">99.069</div>
<div class="t tb" style="left:1160.3px;width:63px;top:425.3px;text-align:center;font-size:10px;color:#0a0a1a">95.049</div>
<div class="t tb" style="left:1223.3px;width:59px;top:425.3px;text-align:center;font-size:10px;color:#0a0a1a">9</div>
<div class="t tb" style="left:25.3px;width:25px;top:443.9px;text-align:center;font-size:10px;color:#0a0a1a">10</div>
<div class="t tb" style="left:53.3px;top:443.9px">PA SOREANG</div>
<div class="t tb" style="left:229.3px;width:38px;top:443.9px;text-align:center;font-size:10px;color:#0a0a1a">1</div>
<div class="t tb" style="left:267.3px;width:37px;top:443.9px;text-align:center;font-size:10px;color:#0a0a1a">1</div>
<div class="t tb" style="left:304.3px;width:42px;top:443.9px;text-align:center;font-size:10px;color:#0a0a1a">19</div>
<div class="t tb" style="left:346.3px;width:79px;top:443.9px;text-align:center;font-size:10px;color:#0a0a1a">18</div>
<div class="t tb" style="left:425.3px;width:89px;top:443.9px;text-align:center;font-size:10px;color:#0a0a1a">9504</div>
<div class="t tb" style="left:514.3px;width:142px;top:443.9px;text-align:center;font-size:10px;color:#0a0a1a">8808</div>
<div class="t tb" style="left:656.3px;width:93px;top:443.9px;text-align:center;font-size:10px;color:#0a0a1a">8808</div>
<div class="t tb" style="left:749.3px;width:110px;top:443.9px;text-align:center;font-size:10px;color:#0a0a1a">8808</div>
<div class="t tb" style="left:859.3px;width:77px;top:443.9px;text-align:center;font-size:10px;color:#0a0a1a">86.099</div>
<div class="t tb" style="left:936.3px;width:93px;top:443.9px;text-align:center;font-size:10px;color:#0a0a1a">99.982</div>
<div class="t tb" style="left:1029.3px;width:131px;top:443.9px;text-align:center;font-size:10px;color:#0a0a1a">98.987</div>
<div class="t tb" style="left:1160.3px;width:63px;top:443.9px;text-align:center;font-size:10px;color:#0a0a1a">95.023</div>
<div class="t tb" style="left:1223.3px;width:59px;top:443.9px;text-align:center;font-size:10px;color:#0a0a1a">10</div>
<div class="t tb" style="left:25.3px;width:25px;top:462.5px;text-align:center;font-size:10px;color:#0a0a1a">11</div>
<div class="t tb" style="left:53.3px;top:462.5px">PA SUMBER</div>
<div class="t tb" style="left:229.3px;width:38px;top:462.5px;text-align:center;font-size:10px;color:#0a0a1a">1</div>
<div class="t tb" style="left:267.3px;width:37px;top:462.5px;text-align:center;font-size:10px;color:#0a0a1a">1</div>
<div class="t tb" style="left:304.3px;width:42px;top:462.5px;text-align:center;font-size:10px;color:#0a0a1a">15</div>
<div class="t tb" style="left:346.3px;width:79px;top:462.5px;text-align:center;font-size:10px;color:#0a0a1a">30</div>
<div class="t tb" style="left:425.3px;width:89px;top:462.5px;text-align:center;font-size:10px;color:#0a0a1a">8615</div>
<div class="t tb" style="left:514.3px;width:142px;top:462.5px;text-align:center;font-size:10px;color:#0a0a1a">7988</div>
<div class="t tb" style="left:656.3px;width:93px;top:462.5px;text-align:center;font-size:10px;color:#0a0a1a">7988</div>
<div class="t tb" style="left:749.3px;width:110px;top:462.5px;text-align:center;font-size:10px;color:#0a0a1a">7988</div>
<div class="t tb" style="left:859.3px;width:77px;top:462.5px;text-align:center;font-size:10px;color:#0a0a1a">87.329</div>
<div class="t tb" style="left:936.3px;width:93px;top:462.5px;text-align:center;font-size:10px;color:#0a0a1a">99.902</div>
<div class="t tb" style="left:1029.3px;width:131px;top:462.5px;text-align:center;font-size:10px;color:#0a0a1a">96.908</div>
<div class="t tb" style="left:1160.3px;width:63px;top:462.5px;text-align:center;font-size:10px;color:#0a0a1a">94.713</div>
<div class="t tb" style="left:1223.3px;width:59px;top:462.5px;text-align:center;font-size:10px;color:#0a0a1a">11</div>
<div class="t tb" style="left:25.3px;width:25px;top:481.0px;text-align:center;font-size:10px;color:#0a0a1a">12</div>
<div class="t tb" style="left:53.3px;top:481.0px">PA INDRAMAYU</div>
<div class="t tb" style="left:229.3px;width:38px;top:481.0px;text-align:center;font-size:10px;color:#0a0a1a">0</div>
<div class="t tb" style="left:267.3px;width:37px;top:481.0px;text-align:center;font-size:10px;color:#0a0a1a">1</div>
<div class="t tb" style="left:304.3px;width:42px;top:481.0px;text-align:center;font-size:10px;color:#0a0a1a">18</div>
<div class="t tb" style="left:346.3px;width:79px;top:481.0px;text-align:center;font-size:10px;color:#0a0a1a">25</div>
<div class="t tb" style="left:425.3px;width:89px;top:481.0px;text-align:center;font-size:10px;color:#0a0a1a">9885</div>
<div class="t tb" style="left:514.3px;width:142px;top:481.0px;text-align:center;font-size:10px;color:#0a0a1a">9067</div>
<div class="t tb" style="left:656.3px;width:93px;top:481.0px;text-align:center;font-size:10px;color:#0a0a1a">9067</div>
<div class="t tb" style="left:749.3px;width:110px;top:481.0px;text-align:center;font-size:10px;color:#0a0a1a">9067</div>
<div class="t tb" style="left:859.3px;width:77px;top:481.0px;text-align:center;font-size:10px;color:#0a0a1a">88.12</div>
<div class="t tb" style="left:936.3px;width:93px;top:481.0px;text-align:center;font-size:10px;color:#0a0a1a">100</div>
<div class="t tb" style="left:1029.3px;width:131px;top:481.0px;text-align:center;font-size:10px;color:#0a0a1a">95.886</div>
<div class="t tb" style="left:1160.3px;width:63px;top:481.0px;text-align:center;font-size:10px;color:#0a0a1a">94.669</div>
<div class="t tb" style="left:1223.3px;width:59px;top:481.0px;text-align:center;font-size:10px;color:#0a0a1a">12</div>
<div class="t tb" style="left:25.3px;width:25px;top:499.6px;text-align:center;font-size:10px;color:#0a0a1a">13</div>
<div class="t tb" style="left:53.3px;top:499.6px">PA BANYUWANGI</div>
<div class="t tb" style="left:229.3px;width:38px;top:499.6px;text-align:center;font-size:10px;color:#0a0a1a">1</div>
<div class="t tb" style="left:267.3px;width:37px;top:499.6px;text-align:center;font-size:10px;color:#0a0a1a">1</div>
<div class="t tb" style="left:304.3px;width:42px;top:499.6px;text-align:center;font-size:10px;color:#0a0a1a">14</div>
<div class="t tb" style="left:346.3px;width:79px;top:499.6px;text-align:center;font-size:10px;color:#0a0a1a">15</div>
<div class="t tb" style="left:425.3px;width:89px;top:499.6px;text-align:center;font-size:10px;color:#0a0a1a">7901</div>
<div class="t tb" style="left:514.3px;width:142px;top:499.6px;text-align:center;font-size:10px;color:#0a0a1a">7450</div>
<div class="t tb" style="left:656.3px;width:93px;top:499.6px;text-align:center;font-size:10px;color:#0a0a1a">7450</div>
<div class="t tb" style="left:749.3px;width:110px;top:499.6px;text-align:center;font-size:10px;color:#0a0a1a">7450</div>
<div class="t tb" style="left:859.3px;width:77px;top:499.6px;text-align:center;font-size:10px;color:#0a0a1a">83.29</div>
<div class="t tb" style="left:936.3px;width:93px;top:499.6px;text-align:center;font-size:10px;color:#0a0a1a">100</div>
<div class="t tb" style="left:1029.3px;width:131px;top:499.6px;text-align:center;font-size:10px;color:#0a0a1a">99.764</div>
<div class="t tb" style="left:1160.3px;width:63px;top:499.6px;text-align:center;font-size:10px;color:#0a0a1a">94.351</div>
<div class="t tb" style="left:1223.3px;width:59px;top:499.6px;text-align:center;font-size:10px;color:#0a0a1a">13</div>
<div class="t tb" style="left:25.3px;width:25px;top:518.2px;text-align:center;font-size:10px;color:#0a0a1a">14</div>
<div class="t tb" style="left:53.3px;top:518.2px">PA CIBINONG</div>
<div class="t tb" style="left:229.3px;width:38px;top:518.2px;text-align:center;font-size:10px;color:#0a0a1a">1</div>
<div class="t tb" style="left:267.3px;width:37px;top:518.2px;text-align:center;font-size:10px;color:#0a0a1a">1</div>
<div class="t tb" style="left:304.3px;width:42px;top:518.2px;text-align:center;font-size:10px;color:#0a0a1a">22</div>
<div class="t tb" style="left:346.3px;width:79px;top:518.2px;text-align:center;font-size:10px;color:#0a0a1a">26</div>
<div class="t tb" style="left:425.3px;width:89px;top:518.2px;text-align:center;font-size:10px;color:#0a0a1a">9449</div>
<div class="t tb" style="left:514.3px;width:142px;top:518.2px;text-align:center;font-size:10px;color:#0a0a1a">8433</div>
<div class="t tb" style="left:656.3px;width:93px;top:518.2px;text-align:center;font-size:10px;color:#0a0a1a">8433</div>
<div class="t tb" style="left:749.3px;width:110px;top:518.2px;text-align:center;font-size:10px;color:#0a0a1a">8433</div>
<div class="t tb" style="left:859.3px;width:77px;top:518.2px;text-align:center;font-size:10px;color:#0a0a1a">81.11</div>
<div class="t tb" style="left:936.3px;width:93px;top:518.2px;text-align:center;font-size:10px;color:#0a0a1a">100</div>
<div class="t tb" style="left:1029.3px;width:131px;top:518.2px;text-align:center;font-size:10px;color:#0a0a1a">98.861</div>
<div class="t tb" style="left:1160.3px;width:63px;top:518.2px;text-align:center;font-size:10px;color:#0a0a1a">93.324</div>
<div class="t tb" style="left:1223.3px;width:59px;top:518.2px;text-align:center;font-size:10px;color:#0a0a1a">14</div>
<div class="t tb" style="left:25.3px;width:25px;top:536.7px;text-align:center;font-size:10px;color:#0a0a1a">15</div>
<div class="t tb" style="left:53.3px;top:536.7px">PA SIDOARJO</div>
<div class="t tb" style="left:229.3px;width:38px;top:536.7px;text-align:center;font-size:10px;color:#0a0a1a">1</div>
<div class="t tb" style="left:267.3px;width:37px;top:536.7px;text-align:center;font-size:10px;color:#0a0a1a">1</div>
<div class="t tb" style="left:304.3px;width:42px;top:536.7px;text-align:center;font-size:10px;color:#0a0a1a">16</div>
<div class="t tb" style="left:346.3px;width:79px;top:536.7px;text-align:center;font-size:10px;color:#0a0a1a">17</div>
<div class="t tb" style="left:425.3px;width:89px;top:536.7px;text-align:center;font-size:10px;color:#0a0a1a">6084</div>
<div class="t tb" style="left:514.3px;width:142px;top:536.7px;text-align:center;font-size:10px;color:#0a0a1a">5385</div>
<div class="t tb" style="left:656.3px;width:93px;top:536.7px;text-align:center;font-size:10px;color:#0a0a1a">5385</div>
<div class="t tb" style="left:749.3px;width:110px;top:536.7px;text-align:center;font-size:10px;color:#0a0a1a">5385</div>
<div class="t tb" style="left:859.3px;width:77px;top:536.7px;text-align:center;font-size:10px;color:#0a0a1a">81.028</div>
<div class="t tb" style="left:936.3px;width:93px;top:536.7px;text-align:center;font-size:10px;color:#0a0a1a">100</div>
<div class="t tb" style="left:1029.3px;width:131px;top:536.7px;text-align:center;font-size:10px;color:#0a0a1a">98.796</div>
<div class="t tb" style="left:1160.3px;width:63px;top:536.7px;text-align:center;font-size:10px;color:#0a0a1a">93.275</div>
<div class="t tb" style="left:1223.3px;width:59px;top:536.7px;text-align:center;font-size:10px;color:#0a0a1a">15</div>
<div class="t tb" style="left:25.3px;width:25px;top:555.3px;text-align:center;font-size:10px;color:#0a0a1a">16</div>
<div class="t tb" style="left:53.3px;top:555.3px">PA KARAWANG</div>
<div class="t tb" style="left:229.3px;width:38px;top:555.3px;text-align:center;font-size:10px;color:#0a0a1a">1</div>
<div class="t tb" style="left:267.3px;width:37px;top:555.3px;text-align:center;font-size:10px;color:#0a0a1a">1</div>
<div class="t tb" style="left:304.3px;width:42px;top:555.3px;text-align:center;font-size:10px;color:#0a0a1a">12</div>
<div class="t tb" style="left:346.3px;width:79px;top:555.3px;text-align:center;font-size:10px;color:#0a0a1a">13</div>
<div class="t tb" style="left:425.3px;width:89px;top:555.3px;text-align:center;font-size:10px;color:#0a0a1a">5134</div>
<div class="t tb" style="left:514.3px;width:142px;top:555.3px;text-align:center;font-size:10px;color:#0a0a1a">4849</div>
<div class="t tb" style="left:656.3px;width:93px;top:555.3px;text-align:center;font-size:10px;color:#0a0a1a">4849</div>
<div class="t tb" style="left:749.3px;width:110px;top:555.3px;text-align:center;font-size:10px;color:#0a0a1a">4849</div>
<div class="t tb" style="left:859.3px;width:77px;top:555.3px;text-align:center;font-size:10px;color:#0a0a1a">82.594</div>
<div class="t tb" style="left:936.3px;width:93px;top:555.3px;text-align:center;font-size:10px;color:#0a0a1a">100</div>
<div class="t tb" style="left:1029.3px;width:131px;top:555.3px;text-align:center;font-size:10px;color:#0a0a1a">95.702</div>
<div class="t tb" style="left:1160.3px;width:63px;top:555.3px;text-align:center;font-size:10px;color:#0a0a1a">92.765</div>
<div class="t tb" style="left:1223.3px;width:59px;top:555.3px;text-align:center;font-size:10px;color:#0a0a1a">16</div>
<div class="t tb" style="left:25.3px;width:25px;top:573.9px;text-align:center;font-size:10px;color:#0a0a1a">17</div>
<div class="t tb" style="left:53.3px;top:573.9px">PA JAKARTA TIMUR</div>
<div class="t tb" style="left:229.3px;width:38px;top:573.9px;text-align:center;font-size:10px;color:#0a0a1a">1</div>
<div class="t tb" style="left:267.3px;width:37px;top:573.9px;text-align:center;font-size:10px;color:#0a0a1a">1</div>
<div class="t tb" style="left:304.3px;width:42px;top:573.9px;text-align:center;font-size:10px;color:#0a0a1a">15</div>
<div class="t tb" style="left:346.3px;width:79px;top:573.9px;text-align:center;font-size:10px;color:#0a0a1a">40</div>
<div class="t tb" style="left:425.3px;width:89px;top:573.9px;text-align:center;font-size:10px;color:#0a0a1a">7130</div>
<div class="t tb" style="left:514.3px;width:142px;top:573.9px;text-align:center;font-size:10px;color:#0a0a1a">6319</div>
<div class="t tb" style="left:656.3px;width:93px;top:573.9px;text-align:center;font-size:10px;color:#0a0a1a">6319</div>
<div class="t tb" style="left:749.3px;width:110px;top:573.9px;text-align:center;font-size:10px;color:#0a0a1a">6319</div>
<div class="t tb" style="left:859.3px;width:77px;top:573.9px;text-align:center;font-size:10px;color:#0a0a1a">78.804</div>
<div class="t tb" style="left:936.3px;width:93px;top:573.9px;text-align:center;font-size:10px;color:#0a0a1a">99.987</div>
<div class="t tb" style="left:1029.3px;width:131px;top:573.9px;text-align:center;font-size:10px;color:#0a0a1a">98.867</div>
<div class="t tb" style="left:1160.3px;width:63px;top:573.9px;text-align:center;font-size:10px;color:#0a0a1a">92.553</div>
<div class="t tb" style="left:1223.3px;width:59px;top:573.9px;text-align:center;font-size:10px;color:#0a0a1a">17</div>
<div class="t tb" style="left:25.3px;width:25px;top:592.4px;text-align:center;font-size:10px;color:#0a0a1a">18</div>
<div class="t tb" style="left:53.3px;top:592.4px">PA SERANG</div>
<div class="t tb" style="left:229.3px;width:38px;top:592.4px;text-align:center;font-size:10px;color:#0a0a1a">1</div>
<div class="t tb" style="left:267.3px;width:37px;top:592.4px;text-align:center;font-size:10px;color:#0a0a1a">1</div>
<div class="t tb" style="left:304.3px;width:42px;top:592.4px;text-align:center;font-size:10px;color:#0a0a1a">16</div>
<div class="t tb" style="left:346.3px;width:79px;top:592.4px;text-align:center;font-size:10px;color:#0a0a1a">21</div>
<div class="t tb" style="left:425.3px;width:89px;top:592.4px;text-align:center;font-size:10px;color:#0a0a1a">5805</div>
<div class="t tb" style="left:514.3px;width:142px;top:592.4px;text-align:center;font-size:10px;color:#0a0a1a">5151</div>
<div class="t tb" style="left:656.3px;width:93px;top:592.4px;text-align:center;font-size:10px;color:#0a0a1a">5151</div>
<div class="t tb" style="left:749.3px;width:110px;top:592.4px;text-align:center;font-size:10px;color:#0a0a1a">5148</div>
<div class="t tb" style="left:859.3px;width:77px;top:592.4px;text-align:center;font-size:10px;color:#0a0a1a">82.646</div>
<div class="t tb" style="left:936.3px;width:93px;top:592.4px;text-align:center;font-size:10px;color:#0a0a1a">99.942</div>
<div class="t tb" style="left:1029.3px;width:131px;top:592.4px;text-align:center;font-size:10px;color:#0a0a1a">94.941</div>
<div class="t tb" style="left:1160.3px;width:63px;top:592.4px;text-align:center;font-size:10px;color:#0a0a1a">92.51</div>
<div class="t tb" style="left:1223.3px;width:59px;top:592.4px;text-align:center;font-size:10px;color:#0a0a1a">18</div>
<div class="t tb" style="left:25.3px;width:25px;top:611.0px;text-align:center;font-size:10px;color:#0a0a1a">19</div>
<div class="t tb" style="left:53.3px;top:611.0px">PA BANDUNG</div>
<div class="t tb" style="left:229.3px;width:38px;top:611.0px;text-align:center;font-size:10px;color:#0a0a1a">1</div>
<div class="t tb" style="left:267.3px;width:37px;top:611.0px;text-align:center;font-size:10px;color:#0a0a1a">1</div>
<div class="t tb" style="left:304.3px;width:42px;top:611.0px;text-align:center;font-size:10px;color:#0a0a1a">15</div>
<div class="t tb" style="left:346.3px;width:79px;top:611.0px;text-align:center;font-size:10px;color:#0a0a1a">24</div>
<div class="t tb" style="left:425.3px;width:89px;top:611.0px;text-align:center;font-size:10px;color:#0a0a1a">8042</div>
<div class="t tb" style="left:514.3px;width:142px;top:611.0px;text-align:center;font-size:10px;color:#0a0a1a">7259</div>
<div class="t tb" style="left:656.3px;width:93px;top:611.0px;text-align:center;font-size:10px;color:#0a0a1a">7259</div>
<div class="t tb" style="left:749.3px;width:110px;top:611.0px;text-align:center;font-size:10px;color:#0a0a1a">7259</div>
<div class="t tb" style="left:859.3px;width:77px;top:611.0px;text-align:center;font-size:10px;color:#0a0a1a">80.235</div>
<div class="t tb" style="left:936.3px;width:93px;top:611.0px;text-align:center;font-size:10px;color:#0a0a1a">99.994</div>
<div class="t tb" style="left:1029.3px;width:131px;top:611.0px;text-align:center;font-size:10px;color:#0a0a1a">96.669</div>
<div class="t tb" style="left:1160.3px;width:63px;top:611.0px;text-align:center;font-size:10px;color:#0a0a1a">92.299</div>
<div class="t tb" style="left:1223.3px;width:59px;top:611.0px;text-align:center;font-size:10px;color:#0a0a1a">19</div>
<div class="t tb" style="left:25.3px;width:25px;top:629.6px;text-align:center;font-size:10px;color:#0a0a1a">20</div>
<div class="t tb" style="left:53.3px;top:629.6px">PA CIANJUR</div>
<div class="t tb" style="left:229.3px;width:38px;top:629.6px;text-align:center;font-size:10px;color:#0a0a1a">1</div>
<div class="t tb" style="left:267.3px;width:37px;top:629.6px;text-align:center;font-size:10px;color:#0a0a1a">1</div>
<div class="t tb" style="left:304.3px;width:42px;top:629.6px;text-align:center;font-size:10px;color:#0a0a1a">8</div>
<div class="t tb" style="left:346.3px;width:79px;top:629.6px;text-align:center;font-size:10px;color:#0a0a1a">13</div>
<div class="t tb" style="left:425.3px;width:89px;top:629.6px;text-align:center;font-size:10px;color:#0a0a1a">5175</div>
<div class="t tb" style="left:514.3px;width:142px;top:629.6px;text-align:center;font-size:10px;color:#0a0a1a">4782</div>
<div class="t tb" style="left:656.3px;width:93px;top:629.6px;text-align:center;font-size:10px;color:#0a0a1a">4782</div>
<div class="t tb" style="left:749.3px;width:110px;top:629.6px;text-align:center;font-size:10px;color:#0a0a1a">4782</div>
<div class="t tb" style="left:859.3px;width:77px;top:629.6px;text-align:center;font-size:10px;color:#0a0a1a">79.852</div>
<div class="t tb" style="left:936.3px;width:93px;top:629.6px;text-align:center;font-size:10px;color:#0a0a1a">100</div>
<div class="t tb" style="left:1029.3px;width:131px;top:629.6px;text-align:center;font-size:10px;color:#0a0a1a">93.522</div>
<div class="t tb" style="left:1160.3px;width:63px;top:629.6px;text-align:center;font-size:10px;color:#0a0a1a">91.125</div>
<div class="t tb" style="left:1223.3px;width:59px;top:629.6px;text-align:center;font-size:10px;color:#0a0a1a">20</div>
<div class="t tb" style="left:25.3px;width:25px;top:648.1px;text-align:center;font-size:10px;color:#0a0a1a">21</div>
<div class="t tb" style="left:53.3px;top:648.1px">PA BEKASI</div>
<div class="t tb" style="left:229.3px;width:38px;top:648.1px;text-align:center;font-size:10px;color:#0a0a1a">1</div>
<div class="t tb" style="left:267.3px;width:37px;top:648.1px;text-align:center;font-size:10px;color:#0a0a1a">1</div>
<div class="t tb" style="left:304.3px;width:42px;top:648.1px;text-align:center;font-size:10px;color:#0a0a1a">14</div>
<div class="t tb" style="left:346.3px;width:79px;top:648.1px;text-align:center;font-size:10px;color:#0a0a1a">23</div>
<div class="t tb" style="left:425.3px;width:89px;top:648.1px;text-align:center;font-size:10px;color:#0a0a1a">5567</div>
<div class="t tb" style="left:514.3px;width:142px;top:648.1px;text-align:center;font-size:10px;color:#0a0a1a">5079</div>
<div class="t tb" style="left:656.3px;width:93px;top:648.1px;text-align:center;font-size:10px;color:#0a0a1a">5079</div>
<div class="t tb" style="left:749.3px;width:110px;top:648.1px;text-align:center;font-size:10px;color:#0a0a1a">5079</div>
<div class="t tb" style="left:859.3px;width:77px;top:648.1px;text-align:center;font-size:10px;color:#0a0a1a">75.675</div>
<div class="t tb" style="left:936.3px;width:93px;top:648.1px;text-align:center;font-size:10px;color:#0a0a1a">100</div>
<div class="t tb" style="left:1029.3px;width:131px;top:648.1px;text-align:center;font-size:10px;color:#0a0a1a">95.441</div>
<div class="t tb" style="left:1160.3px;width:63px;top:648.1px;text-align:center;font-size:10px;color:#0a0a1a">90.372</div>
<div class="t tb" style="left:1223.3px;width:59px;top:648.1px;text-align:center;font-size:10px;color:#0a0a1a">21</div>
<div class="t tb" style="left:25.3px;width:25px;top:666.7px;text-align:center;font-size:10px;color:#0a0a1a">22</div>
<div class="t tb" style="left:53.3px;top:666.7px">PA JAKARTA SELATAN</div>
<div class="t tb" style="left:229.3px;width:38px;top:666.7px;text-align:center;font-size:10px;color:#0a0a1a">0</div>
<div class="t tb" style="left:267.3px;width:37px;top:666.7px;text-align:center;font-size:10px;color:#0a0a1a">1</div>
<div class="t tb" style="left:304.3px;width:42px;top:666.7px;text-align:center;font-size:10px;color:#0a0a1a">18</div>
<div class="t tb" style="left:346.3px;width:79px;top:666.7px;text-align:center;font-size:10px;color:#0a0a1a">32</div>
<div class="t tb" style="left:425.3px;width:89px;top:666.7px;text-align:center;font-size:10px;color:#0a0a1a">6074</div>
<div class="t tb" style="left:514.3px;width:142px;top:666.7px;text-align:center;font-size:10px;color:#0a0a1a">5321</div>
<div class="t tb" style="left:656.3px;width:93px;top:666.7px;text-align:center;font-size:10px;color:#0a0a1a">5321</div>
<div class="t tb" style="left:749.3px;width:110px;top:666.7px;text-align:center;font-size:10px;color:#0a0a1a">5322</div>
<div class="t tb" style="left:859.3px;width:77px;top:666.7px;text-align:center;font-size:10px;color:#0a0a1a">69.553</div>
<div class="t tb" style="left:936.3px;width:93px;top:666.7px;text-align:center;font-size:10px;color:#0a0a1a">99.868</div>
<div class="t tb" style="left:1029.3px;width:131px;top:666.7px;text-align:center;font-size:10px;color:#0a0a1a">98.136</div>
<div class="t tb" style="left:1160.3px;width:63px;top:666.7px;text-align:center;font-size:10px;color:#0a0a1a">89.186</div>
<div class="t tb" style="left:1223.3px;width:59px;top:666.7px;text-align:center;font-size:10px;color:#0a0a1a">22</div>
<div class="t tb" style="left:25.3px;width:25px;top:685.3px;text-align:center;font-size:10px;color:#0a0a1a">23</div>
<div class="t tb" style="left:53.3px;top:685.3px">PA TIGARAKSA</div>
<div class="t tb" style="left:229.3px;width:38px;top:685.3px;text-align:center;font-size:10px;color:#0a0a1a">1</div>
<div class="t tb" style="left:267.3px;width:37px;top:685.3px;text-align:center;font-size:10px;color:#0a0a1a">1</div>
<div class="t tb" style="left:304.3px;width:42px;top:685.3px;text-align:center;font-size:10px;color:#0a0a1a">18</div>
<div class="t tb" style="left:346.3px;width:79px;top:685.3px;text-align:center;font-size:10px;color:#0a0a1a">22</div>
<div class="t tb" style="left:425.3px;width:89px;top:685.3px;text-align:center;font-size:10px;color:#0a0a1a">8520</div>
<div class="t tb" style="left:514.3px;width:142px;top:685.3px;text-align:center;font-size:10px;color:#0a0a1a">7550</div>
<div class="t tb" style="left:656.3px;width:93px;top:685.3px;text-align:center;font-size:10px;color:#0a0a1a">7550</div>
<div class="t tb" style="left:749.3px;width:110px;top:685.3px;text-align:center;font-size:10px;color:#0a0a1a">7551</div>
<div class="t tb" style="left:859.3px;width:77px;top:685.3px;text-align:center;font-size:10px;color:#0a0a1a">79.116</div>
<div class="t tb" style="left:936.3px;width:93px;top:685.3px;text-align:center;font-size:10px;color:#0a0a1a">99.732</div>
<div class="t tb" style="left:1029.3px;width:131px;top:685.3px;text-align:center;font-size:10px;color:#0a0a1a">86.389</div>
<div class="t tb" style="left:1160.3px;width:63px;top:685.3px;text-align:center;font-size:10px;color:#0a0a1a">88.412</div>
<div class="t tb" style="left:1223.3px;width:59px;top:685.3px;text-align:center;font-size:10px;color:#0a0a1a">23</div>
<div class="t tb" style="left:25.3px;width:25px;top:703.8px;text-align:center;font-size:10px;color:#0a0a1a">24</div>
<div class="t tb" style="left:53.3px;top:703.8px">PA GARUT</div>
<div class="t tb" style="left:229.3px;width:38px;top:703.8px;text-align:center;font-size:10px;color:#0a0a1a">1</div>
<div class="t tb" style="left:267.3px;width:37px;top:703.8px;text-align:center;font-size:10px;color:#0a0a1a">1</div>
<div class="t tb" style="left:304.3px;width:42px;top:703.8px;text-align:center;font-size:10px;color:#0a0a1a">13</div>
<div class="t tb" style="left:346.3px;width:79px;top:703.8px;text-align:center;font-size:10px;color:#0a0a1a">16</div>
<div class="t tb" style="left:425.3px;width:89px;top:703.8px;text-align:center;font-size:10px;color:#0a0a1a">7060</div>
<div class="t tb" style="left:514.3px;width:142px;top:703.8px;text-align:center;font-size:10px;color:#0a0a1a">6500</div>
<div class="t tb" style="left:656.3px;width:93px;top:703.8px;text-align:center;font-size:10px;color:#0a0a1a">6500</div>
<div class="t tb" style="left:749.3px;width:110px;top:703.8px;text-align:center;font-size:10px;color:#0a0a1a">6500</div>
<div class="t tb" style="left:859.3px;width:77px;top:703.8px;text-align:center;font-size:10px;color:#0a0a1a">81.08</div>
<div class="t tb" style="left:936.3px;width:93px;top:703.8px;text-align:center;font-size:10px;color:#0a0a1a">99.96</div>
<div class="t tb" style="left:1029.3px;width:131px;top:703.8px;text-align:center;font-size:10px;color:#0a0a1a">82.9</div>
<div class="t tb" style="left:1160.3px;width:63px;top:703.8px;text-align:center;font-size:10px;color:#0a0a1a">87.98</div>
<div class="t tb" style="left:1223.3px;width:59px;top:703.8px;text-align:center;font-size:10px;color:#0a0a1a">24</div>
<div class="a" style="left:0;top:711px;width:1301px;height:17px;background:#f0f0f0"></div>
<div class="a" style="left:17px;top:711px;width:120px;height:17px;background:#e6e6e6"></div>
<div class="t" style="left:38px;top:713px;font-size:11.6px;letter-spacing:-0.25px;color:#222">16,18 x 12,50 in</div>
<svg style="left:140px;top:714px" width="8" height="10"><path d="M6 1L2 5l4 4" fill="none" stroke="#444" stroke-width="1.6"/></svg>
<div class="a" style="left:225px;top:712px;width:932px;height:15px;background:#cdcdcd"></div>
<svg style="left:1272px;top:714px" width="8" height="10"><path d="M2 1l4 4-4 4" fill="none" stroke="#444" stroke-width="1.6"/></svg>
<div class="a" style="left:1285px;top:711px;width:16px;height:17px;background:#f0f0f0"></div>
<div class="a" style="left:0;top:728px;width:1366px;height:40px;background:#1b2743"></div>
<svg style="left:16px;top:740px" width="17" height="17"><path d="M0 2.3L7 1.3v6.5H0z M8 1.1L17 0v7.8H8z M0 8.8h7v6.5L0 14.3z M8 8.8h9V17l-9-1.2z" fill="#fff"/></svg>
<div class="a" style="left:48px;top:728px;width:344px;height:40px;background:#f2f2f2;border:1px solid #d8d8d8"></div>
<svg style="left:59px;top:738px" width="20" height="20"><circle cx="12.5" cy="7.5" r="6" fill="none" stroke="#222" stroke-width="1.4"/><path d="M8.3 11.7L1.5 18.5" stroke="#222" stroke-width="1.6"/></svg>
<div class="t" style="left:88px;top:741px;font-size:14.5px;color:#3a3a3a">Type here to search</div>
<div class="a" style="left:737px;top:728px;width:48px;height:40px;background:#474f63"></div>
<svg style="left:0;top:0" width="1366" height="768" viewBox="0 0 1366 768"><defs><linearGradient id="edg" x1="0" y1="1" x2="1" y2="0"><stop offset="0" stop-color="#0f6fd0"/><stop offset="0.55" stop-color="#27a9e8"/><stop offset="1" stop-color="#52d66e"/></linearGradient><linearGradient id="ff" x1="0" y1="1" x2="1" y2="0"><stop offset="0" stop-color="#e62f5a"/><stop offset="0.5" stop-color="#ff7a1a"/><stop offset="1" stop-color="#ffd22a"/></linearGradient><linearGradient id="wd" x1="0" y1="0" x2="0" y2="1"><stop offset="0" stop-color="#dbe8f8"/><stop offset="1" stop-color="#ffffff"/></linearGradient><linearGradient id="xl" x1="0" y1="0" x2="0" y2="1"><stop offset="0" stop-color="#b9dca6"/><stop offset="1" stop-color="#eef7e8"/></linearGradient></defs><path d="M408.6 739.4h8.8v12.2h-8.8z" fill="none" stroke="#fff" stroke-width="1.3"/><path d="M406 738.6h14M406 752.4h14" stroke="#fff" stroke-width="1.3"/><path d="M421.6 740v3M421.6 744.4v3M421.6 748.8v3" stroke="#fff" stroke-width="1.6"/><circle cx="467" cy="747.8" r="12" fill="url(#edg)"/><path d="M456 748 c0-6 5-11 11-11 c6.5 0 11.6 4.6 11.6 10 c0 3.6-3 5.6-6.4 5.6 c-3 0-5.2-1.2-5.2-3.4 c0-1 0.6-1.6 0.6-2.6 c0-2.2-2.4-3.6-5-3.6 c-3.6 0-6.6 2.6-6.6 5" fill="#1b2743" opacity="0.0"/><path d="M461 751 c0-3.4 2.6-5.6 5.6-5.6 c2.8 0 4.6 1.6 4.6 3.6 c0 1.4-0.8 2.4-2.2 2.4 h-2 c-1 0-1.6 0.6-1.6 1.4 c0 2.6 3.4 4.6 7.4 4.6 c1.4 0 2.6-0.3 3.6-0.8 c-2 2.6-5.2 4.2-8.6 4.2 c-4 0-6.8-4.2-6.8-9.8z" fill="#0a4fa8"/><circle cx="466.6" cy="750.6" r="2.8" fill="#12325e"/><path d="M504.8 739.6h6.2l1.6 1.4h14.1v15.3h-21.9z" fill="#f2b640"/><rect x="504.8" y="742.4" width="21.9" height="13.9" fill="#ffd45c"/><path d="M509.2 756.3v-6.2h13.2v6.2h-4.2v-3h-4.8v3z" fill="#3f8ad8"/><circle cx="565" cy="748.4" r="10.6" fill="url(#ff)"/><path d="M555 744 l2.4-6 2 3.4 M568 739 l4-3.2 2.6 6" fill="#ffb320"/><path d="M559.4 748.6 c0-3 2.6-5.4 5.8-5.4 c3.2 0 5.6 2.4 5.6 5.2 c0 3-2.6 5.2-5.8 5.2 c-2.6 0-4.6-1.4-5.4-3.4" fill="#7b3fd8"/><path d="M555.6 741.6 c2-3.6 5.8-5.6 10-5.6 c4.6 0 8.2 2.4 10.2 6 c-2-1.6-5-2.6-8.6-2.6 c-4.6 0-9 1-11.6 2.2z" fill="#ffcf2c"/><circle cx="614" cy="747.6" r="11.2" fill="#e0463a"/><path d="M614 747.6 L604.3 742 A11.2 11.2 0 0 0 614 758.8 Z" fill="#1ea05a"/><path d="M614 747.6 L623.7 742 A11.2 11.2 0 0 1 614 758.8 Z" fill="#fbc63a"/><circle cx="614" cy="747.6" r="5" fill="#fff"/><circle cx="614" cy="747.6" r="3.9" fill="#4587f2"/><rect x="651.2" y="736.4" width="23.8" height="22.6" rx="2.6" fill="#6ea6d6"/><circle cx="663" cy="747.6" r="9.6" fill="#b8d6ee"/><path d="M653.8 750 a9.6 9.6 0 0 0 18.6 0" fill="none" stroke="#2a5c9c" stroke-width="2.4"/><ellipse cx="663.4" cy="746.6" rx="7.6" ry="3.6" transform="rotate(-28 663.4 746.6)" fill="#e03036"/><path d="M700.6 736.8h20.4v15.4l-4.6 4.6h-15.8z" fill="url(#wd)"/><path d="M716.4 756.8l4.6-4.6h-3.6c-0.6 0-1 0.4-1 1z" fill="#c8d8ea"/><text x="710.6" y="751.4" text-anchor="middle" font-family="Liberation Sans" font-weight="bold" font-size="15.5" fill="#1f5fb6">W</text><rect x="750" y="736.6" width="21.8" height="21.2" rx="2.2" fill="#d2120c"/><path d="M760.9 740.2 c-1 0-1.4 1-1.2 2.6 c0.2 1.8 1 4 2.2 6 c-1.4 3-3 5.4-4.6 6.6 c-1.2 0.8-0.6 1.8 0.4 1.2 c1.8-1 3.4-3 4.8-5.6 c2.2-0.8 4.8-1.2 6.8-1 c1.6 0.2 1.8-1 0.6-1.4 c-1.6-0.6-4-0.6-6.4-0.2 c-1.2-2-1.8-4-1.8-5.6 c0-1.4-0.2-2.6-0.8-2.6z" fill="none" stroke="#fff" stroke-width="1.2"/><path d="M798.4 736.8h21v15.4l-4.6 4.6h-16.4z" fill="url(#xl)"/><path d="M814.8 756.8l4.6-4.6h-3.6c-0.6 0-1 0.4-1 1z" fill="#cde0c4"/><text x="808.6" y="751.6" text-anchor="middle" font-family="Liberation Sans" font-weight="bold" font-size="15" fill="#2f8a3c">X</text></svg>
<div class="a" style="left:496px;top:766px;width:38px;height:2px;background:#8cc4ee"></div>
<div class="a" style="left:594px;top:766px;width:40px;height:2px;background:#8cc4ee"></div>
<div class="a" style="left:643px;top:766px;width:40px;height:2px;background:#8cc4ee"></div>
<div class="a" style="left:692px;top:766px;width:40px;height:2px;background:#8cc4ee"></div>
<div class="a" style="left:737px;top:766px;width:48px;height:2px;background:#8cc4ee"></div>
<div class="a" style="left:790px;top:766px;width:40px;height:2px;background:#8cc4ee"></div>
<svg style="left:1005px;top:737px" width="24" height="22"><path d="M5 13a4 4 0 0 1 1-8 6 6 0 0 1 11 0 4 4 0 0 1 2 8z" fill="#cfe0f0"/><path d="M8 15v3M12 15v5M16 15v3" stroke="#7ab8e8" stroke-width="1.5"/></svg>
<div class="t" style="left:1038px;top:740px;font-size:13.8px;letter-spacing:-0.25px;color:#f2f2f2">30°C&nbsp;&nbsp;Hujan</div>
<svg style="left:1129px;top:742px" width="12" height="8"><path d="M1 7l5-5 5 5" fill="none" stroke="#fff" stroke-width="1.3"/></svg>
<svg style="left:1150px;top:739px" width="16" height="18"><rect x="2" y="4" width="9" height="9" rx="2" fill="none" stroke="#fff" stroke-width="1.3"/><path d="M11 7l4-2v7l-4-2" fill="none" stroke="#fff" stroke-width="1.2"/></svg>
<svg style="left:1177px;top:739px" width="18" height="16"><path d="M1 13 a12 12 0 0 1 12 -12 M4 13 a9 9 0 0 1 9 -9 M7 13 a6 6 0 0 1 6 -6" fill="none" stroke="#fff" stroke-width="1.2"/><circle cx="12" cy="13" r="1.5" fill="#fff"/></svg>
<svg style="left:1199px;top:740px" width="18" height="14"><rect x="5" y="3" width="12" height="8" fill="none" stroke="#fff" stroke-width="1.2"/><rect x="7" y="5" width="8" height="4" fill="#fff"/><path d="M0 7h5M2 4v6" stroke="#fff" stroke-width="1.2"/></svg>
<svg style="left:1223px;top:739px" width="18" height="16"><path d="M1 5h3l4-4v14l-4-4H1z" fill="none" stroke="#fff" stroke-width="1.2"/><path d="M11 5a4 4 0 0 1 0 6M13 3a7 7 0 0 1 0 10" fill="none" stroke="#fff" stroke-width="1.1"/></svg>
<div class="t" style="left:1248px;top:732px;width:60px;text-align:center;font-size:11.8px;color:#fff">14:07</div>
<div class="t" style="left:1243px;top:750px;width:70px;text-align:center;font-size:11.6px;color:#fff">06/01/2022</div>
<svg style="left:1324px;top:737px" width="26" height="26"><path d="M2 2h16v12H8l-4 3v-3H2z" fill="#fff"/><circle cx="17" cy="17" r="7" fill="#1b2743" stroke="#aaa" stroke-width="1"/><text x="17" y="21" text-anchor="middle" font-family="Liberation Sans" font-weight="bold" font-size="10" fill="#fff">4</text></svg>
<div class="a" style="left:1361px;top:728px;width:1px;height:40px;background:#5a6478"></div>
<svg style="left:0;top:0" width="1366" height="768" viewBox="0 0 1366 768"><circle cx="1341.3" cy="147.6" r="6.6" fill="none" stroke="#6b6b6b" stroke-width="2.3"/><path d="M1346.2 152.6 L1351.6 158.2" stroke="#6b6b6b" stroke-width="2.6" stroke-linecap="round"/><path d="M1340.4 144.6v6l-2.8-3z M1342.2 144.6v6l2.8-3z" fill="#6b6b6b"/><rect x="1328.5" y="172.8" width="29" height="1.2" fill="#cfcfcf"/><path d="M1333.2 186.2h8.8l5 5v14.4h-13.8z" fill="#d6ecee" stroke="#1c8a86" stroke-width="2" stroke-linejoin="round"/><path d="M1338.6 189.6v3.4l-2.6 4.6M1338.6 193l3.8 3.4" fill="none" stroke="#1c8a86" stroke-width="0.9"/><circle cx="1348.6" cy="202.2" r="5.6" fill="#1c8a86"/><path d="M1345.2 202.2h6M1348.8 199.4l2.8 2.8-2.8 2.8" fill="none" stroke="#fff" stroke-width="1.6"/><rect x="1333.2" y="233" width="19.6" height="7.6" fill="#f4cce4" stroke="#d6339a" stroke-width="2"/><rect x="1333.2" y="244.2" width="7.6" height="7.8" fill="#f4cce4" stroke="#d6339a" stroke-width="2"/><path d="M1344.4 245.2h8.6M1344.4 248.2h8.6M1344.4 251.2h8.6" stroke="#d6339a" stroke-width="1.3"/><path d="M1333.2 278.6h8.8l5 5v14.4h-13.8z" fill="#fbdfe0" stroke="#d8383e" stroke-width="2" stroke-linejoin="round"/><path d="M1338.6 282v3.4l-2.6 4.6M1338.6 285.4l3.8 3.4" fill="none" stroke="#d8383e" stroke-width="0.9"/><circle cx="1348.6" cy="295.6" r="5.8" fill="#d8383e"/><path d="M1345.2 295.6h6.8M1348.6 292.2v6.8" stroke="#fff" stroke-width="1.8"/><path d="M1334.4 325.2h16.2a1.8 1.8 0 0 1 1.8 1.8v12.2a1.8 1.8 0 0 1-1.8 1.8h-10.8l-3.6 3.8v-3.8h-1.8a1.8 1.8 0 0 1-1.8-1.8v-12.2a1.8 1.8 0 0 1 1.8-1.8z" fill="#d8b22c"/><path d="M1337.2 330.8h10.6M1337.2 334.6h10.6" stroke="#fff" stroke-width="1.8"/><path d="M1341.6 370.4h8.8l3.4 3.4v9.6h-12.2z" fill="#5a5ddf"/><path d="M1350.6 369.4l4.2 0v4.2z" fill="#5a5ddf"/><rect x="1332.4" y="370.4" width="10" height="13" fill="#fff" stroke="#5a5ddf" stroke-width="2"/><path d="M1337 373.6v2.6l-2 3.2M1337 376.2l3 2.4" fill="none" stroke="#5a5ddf" stroke-width="0.9"/><rect x="1341.4" y="379.6" width="2.9" height="8" fill="#5a5ddf"/><path d="M1336.9 387.3h11.4l-5.7 5.4z" fill="#5a5ddf"/><rect x="1345.2" y="418" width="8.6" height="18.2" fill="#d6e8d0" stroke="#6cbf4a" stroke-width="2"/><path d="M1333.8 427v9.3h9.2" fill="none" stroke="#6cbf4a" stroke-width="2" stroke-dasharray="2.2 1.6"/><path d="M1334 427.2h9" fill="none" stroke="#6cbf4a" stroke-width="2" stroke-dasharray="2.2 1.6"/><path d="M1341.4 418.4 L1336.4 423" stroke="#6cbf4a" stroke-width="2.2"/><path d="M1333.4 418.6v6.6h6.6z" fill="#6cbf4a"/><path d="M1336.4 463.8h9.4l5 5v13h-14.4z" fill="#d8eeee" stroke="#1c8a86" stroke-width="2" stroke-linejoin="round"/><path d="M1343.4 467.6v3.6l-2.8 4.6M1343.4 471.2l3.6 3.4" fill="none" stroke="#1c8a86" stroke-width="1"/><path d="M1332.6 468.6l3.8 3.6-3.8 3.6M1355 468.6l-3.8 3.6 3.8 3.6" fill="none" stroke="#1c8a86" stroke-width="2"/><g transform="translate(1336.2 524) rotate(-42)"><rect x="0" y="-3" width="19.6" height="6" rx="3" fill="#f6c6dc" stroke="#d6339a" stroke-width="2"/><path d="M0 -3.2 L-4.2 0 L0 3.2 Z" fill="#d6339a"/></g><path d="M1344.6 521.8h9.6v5.4h-14.6z" fill="#d6339a"/><path d="M1343 554.8 L1351 558.4 V566 C1351 571 1347.4 574.6 1343 576.2 C1338.6 574.6 1335 571 1335 566 V558.4 Z" fill="#f2f2fc" stroke="#5a5ddf" stroke-width="2" stroke-linejoin="round"/><path d="M1343 556.4 L1336.6 559.4 V566 C1336.6 570 1339.4 573 1343 574.4 Z" fill="#d4d8f6"/><path d="M1335.4 602h11l4.4 4.4v14h-15.4z" fill="#f6d4f6" stroke="#b52cc9" stroke-width="2" stroke-linejoin="round"/><path d="M1338.4 607.4h6M1338.4 609.6h9M1338.4 611.8h9" stroke="#b52cc9" stroke-width="1.1"/><rect x="1338.4" y="614" width="2.6" height="4.6" fill="#b52cc9"/><path d="M1343.6 615.2l3.4 3.4M1347 615.2l-3.4 3.4" stroke="#b52cc9" stroke-width="1.2"/><g transform="translate(1337 657) rotate(-42)"><rect x="0" y="-3" width="16" height="6" rx="3" fill="#dcc4f0" stroke="#a06ad8" stroke-width="2"/></g></svg>
<div class="a" style="left:1320px;top:656px;width:46px;height:55px;background:#f8f8f8"></div>
<svg style="left:0;top:0" width="1366" height="768" viewBox="0 0 1366 768"><path d="M1337.4 665.2l5.6 5.4 5.6-5.4" fill="none" stroke="#6b6b6b" stroke-width="2"/><rect x="1329" y="680.4" width="28" height="1.2" fill="#d2d2d2"/><path d="M1339.2 697v16" stroke="#6b6b6b" stroke-width="2.4"/><path d="M1342.6 705h9M1347.8 701l4 4-4 4" fill="none" stroke="#6b6b6b" stroke-width="2"/></svg></body></html>
